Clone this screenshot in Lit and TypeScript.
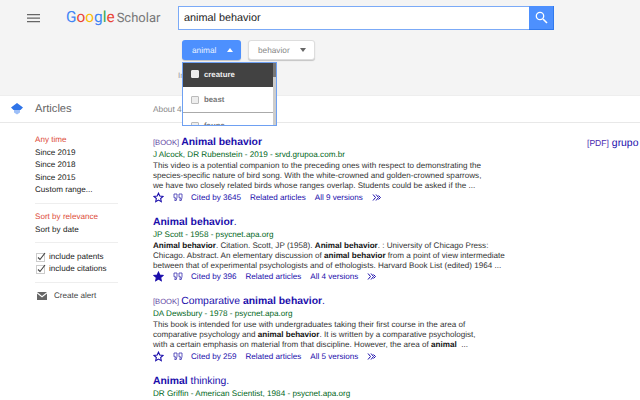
import { css, html, LitElement, nothing } from 'lit';
import { customElement } from 'lit/decorators.js';

interface Result {
  tag?: string;
  title: unknown;
  meta: string;
  lines: unknown[];
  starred?: boolean;
  cited: number;
  versions: number;
}

const RESULTS: Result[] = [
  {
    tag: '[BOOK]',
    title: html`<b>Animal behavior</b>`,
    meta: 'J Alcock, DR Rubenstein - 2019 - srvd.grupoa.com.br',
    lines: [
      'This video is a potential companion to the preceding ones with respect to demonstrating the',
      'species-specific nature of bird song. With the white-crowned and golden-crowned sparrows,',
      'we have two closely related birds whose ranges overlap. Students could be asked if the ...'
    ],
    cited: 3645,
    versions: 9
  },
  {
    title: html`<b>Animal behavior</b>.`,
    meta: 'JP Scott - 1958 - psycnet.apa.org',
    lines: [
      html`<b>Animal behavior</b>. Citation. Scott, JP (1958). <b>Animal behavior</b>. : University of Chicago Press:`,
      html`Chicago. Abstract. An elementary discussion of <b>animal behavior</b> from a point of view intermediate`,
      'between that of experimental psychologists and of ethologists. Harvard Book List (edited) 1964 ...'
    ],
    starred: true,
    cited: 396,
    versions: 4
  },
  {
    tag: '[BOOK]',
    title: html`Comparative <b>animal behavior</b>.`,
    meta: 'DA Dewsbury - 1978 - psycnet.apa.org',
    lines: [
      'This book is intended for use with undergraduates taking their first course in the area of',
      html`comparative psychology and <b>animal behavior</b>. It is written by a comparative psychologist,`,
      html`with a certain emphasis on material from that discipline. However, the area of <b>animal</b> &nbsp;...`
    ],
    cited: 259,
    versions: 5
  },
  {
    title: html`<b>Animal</b> thinking.`,
    meta: 'DR Griffin - American Scientist, 1984 - psycnet.apa.org',
    lines: [],
    cited: 0,
    versions: 0
  }
];

@customElement('app-root')
export class AppRoot extends LitElement {
  static styles = css`
    :host {
      display: block;
      width: 640px;
      height: 400px;
      overflow: hidden;
      position: relative;
      background: #fff;
      font-family: 'Liberation Sans', Arial, sans-serif;
      color: #222;
      text-rendering: geometricPrecision;
    }

    svg {
      display: block;
    }

    .top {
      height: 96px;
      box-sizing: border-box;
      background: #f4f4f4;
      border-bottom: 1px solid #eee;
      padding: 6px 0 0 27px;
    }

    .top-row {
      display: flex;
      align-items: center;
      height: 24px;
    }

    .logo {
      width: 112px;
      margin-left: 26px;
      font: 15.4px/24px Roboto, sans-serif;
      color: #777;
      white-space: nowrap;
    }

    .logo .b { color: #4285f4; }
    .logo .r { color: #ea4335; }
    .logo .y { color: #fbbc05; }
    .logo .g { color: #34a853; }
    .logo .sp { margin-left: 2px; font-size: 13px; }

    .search {
      width: 376px;
      height: 24px;
      box-sizing: border-box;
      display: flex;
      background: #fff;
      border: 1px solid #7baaf7;
    }

    .search-text {
      flex: 1;
      padding-left: 5px;
      font-size: 10.85px;
      line-height: 22px;
      color: #222;
    }

    .search-btn {
      width: 25px;
      margin: -1px;
      background: #4d90fe;
      border-bottom: 1px solid #3079ed;
      border-right: 1px solid #3079ed;
      box-sizing: border-box;
      display: flex;
      align-items: center;
      justify-content: center;
    }

    .chips {
      position: relative;
      display: flex;
      gap: 7px;
      margin: 10px 0 0 155px;
    }

    .chip {
      box-sizing: border-box;
      height: 20px;
      border-radius: 3px;
      display: flex;
      align-items: center;
      justify-content: space-between;
      font-size: 8.25px;
      box-shadow: 0 1px 1px rgba(0, 0, 0, 0.2);
    }

    .chip.on {
      width: 59px;
      background: #4d90fe;
      color: #e8f0fe;
      padding: 0 8px 0 10px;
    }

    .chip.off {
      width: 67px;
      background: #fff;
      color: #888;
      border: 1px solid #ddd;
      padding: 0 8px 0 9px;
    }

    .caret-up,
    .caret-down {
      width: 0;
      height: 0;
      border-left: 3.5px solid transparent;
      border-right: 3.5px solid transparent;
    }

    .caret-up { border-bottom: 4px solid #fff; }
    .caret-down { border-top: 4px solid #666; }

    .hidden-line {
      margin: 11px 0 0 151px;
      font-size: 8px;
      line-height: 10px;
      color: #999;
    }

    .menu {
      position: absolute;
      left: 0;
      top: 22px;
      width: 95px;
      height: 64px;
      box-sizing: border-box;
      overflow: hidden;
      background: #fff;
      border: 1px solid #6ea0f2;
      z-index: 2;
    }

    .menu-item {
      height: 26px;
      box-sizing: border-box;
      width: 90px;
      display: flex;
      align-items: center;
      gap: 5px;
      padding: 0 0 0 8px;
      font-size: 7.8px;
      font-weight: bold;
      color: #777;
      border-bottom: 1px solid #aaa;
    }

    .menu-item.active {
      height: 24px;
      padding-bottom: 2px;
      background: #424242;
      color: #eee;
      border-bottom: none;
    }

    .box {
      width: 6px;
      height: 6px;
      background: #eee;
      border: 1px solid #bbb;
      border-radius: 1px;
    }

    .active .box {
      background: #eee;
      border-color: #eee;
    }

    .scroll {
      position: absolute;
      right: 0;
      top: 0;
      bottom: 0;
      width: 3px;
      background: #ccc;
    }

    .scroll::before {
      content: '';
      display: block;
      height: 14px;
      background: #777;
    }

    .bar {
      height: 27px;
      box-sizing: border-box;
      display: flex;
      align-items: center;
      border-bottom: 1px solid #e8e8e8;
      padding-left: 11px;
    }

    .bar-title {
      width: 118px;
      margin-left: 12px;
      font-size: 11.2px;
      color: #666;
    }

    .about {
      font-size: 8.3px;
      color: #888;
    }

    .main {
      display: flex;
      padding: 11px 0 0 35px;
    }

    .side {
      width: 83px;
      margin-right: 35px;
      flex: none;
      font-size: 8.1px;
      line-height: 12.5px;
      color: #222;
    }

    .side .sel {
      color: #dd4b39;
    }

    .side hr {
      border: 0;
      border-top: 1px solid #eee;
      margin: 6px 0 7.5px;
    }

    .check {
      display: flex;
      align-items: center;
      gap: 3px;
      margin-left: 1px;
    }

    .check svg {
      flex: none;
    }

    .alert {
      display: flex;
      align-items: center;
      gap: 7px;
      margin-left: 2px;
      color: #444;
    }

    .results {
      width: 434px;
      flex: none;
      margin-top: 3px;
    }

    .result {
      height: 79.5px;
    }

    .title {
      font-size: 10.4px;
      line-height: 12px;
      color: #1a0dab;
      white-space: nowrap;
    }

    .title b {
      font-weight: bold;
    }

    .tag {
      font-size: 7.6px;
      color: #5a3ea0;
      margin-right: 2px;
    }

    .meta {
      font-size: 8.15px;
      line-height: 12px;
      color: #006621;
      white-space: nowrap;
    }

    .snippet {
      font-size: 8.1px;
      line-height: 10px;
      color: #333;
      white-space: nowrap;
    }

    .snippet b {
      color: #111;
    }

    .actions {
      display: flex;
      align-items: center;
      gap: 9px;
      height: 12px;
      font-size: 8.1px;
      color: #1a0dab;
      white-space: nowrap;
    }

    .actions .quote {
      margin-right: -1px;
    }

    .aside {
      margin-top: 3px;
      font-size: 10.4px;
      line-height: 12px;
      color: #1a0dab;
      white-space: nowrap;
    }

    .aside .pdf {
      font-size: 8.6px;
      color: #4b2ab0;
    }
  `;

  private star(filled?: boolean) {
    return html`<svg width="11" height="11" viewBox="0 0 24 24" fill=${filled ? '#1a0dab' : 'none'} stroke="#1a0dab" stroke-width="2.4"><path d="M12 2.5l2.9 6.3 6.9.8-5.1 4.7 1.4 6.8-6.1-3.4-6.1 3.4 1.4-6.8-5.1-4.7 6.9-.8z"/></svg>`;
  }

  private actions(r: Result) {
    return html`<div class="actions">
      ${this.star(r.starred)}
      <svg class="quote" width="10" height="9" viewBox="0 0 20 18" fill="none" stroke="#3a30b0" stroke-width="1.6"><path d="M2 2h6v6.5L6.5 15H3.5L5 9.500H2zM12 2h6v6.500L16.500 15h-3L15 9.500h-3z"/></svg>
      <span>Cited by ${r.cited}</span>
      <span>Related articles</span>
      <span>All ${r.versions} versions</span>
      <svg width="10" height="9" viewBox="0 0 20 18" fill="none" stroke="#1a0dab" stroke-width="2"><path d="M2 3l5 6-5 6M8 3l5 6-5 6M13 5l4 4-4 4"/></svg>
    </div>`;
  }

  private check(label: string) {
    return html`<div class="check">
      <svg width="10" height="10" viewBox="0 0 10 10" fill="none"><rect x="0.5" y="1.5" width="8" height="8" fill="#fff" stroke="#ccc"/><path d="M2 5.5l2 2 5-6.5" stroke="#444" stroke-width="1.1"/></svg>
      ${label}
    </div>`;
  }

  render() {
    return html`
      <div class="top">
        <div class="top-row">
          <svg width="13" height="9" viewBox="0 0 13 9" fill="#666"><path d="M0 0h13v1.300H0zM0 3.500h13v1.300H0zM0 7h13v1.300H0z"/></svg>
          <div class="logo"><span class="b">G</span><span class="r">o</span><span class="y">o</span><span class="b">g</span><span class="g">l</span><span class="r">e</span><span class="sp">Scholar</span></div>
          <div class="search">
            <div class="search-text">animal behavior</div>
            <div class="search-btn">
              <svg width="13" height="13" viewBox="0 0 13 13" fill="none" stroke="#fff"><circle cx="5" cy="5" r="3.7" stroke-width="1.3"/><path d="M8 8l4 4" stroke-width="1.6"/></svg>
            </div>
          </div>
        </div>
        <div class="chips">
          <div class="chip on">animal<span class="caret-up"></span></div>
          <div class="chip off">behavior<span class="caret-down"></span></div>
          <div class="menu">
            <div class="menu-item active"><span class="box"></span>creature</div>
            <div class="menu-item"><span class="box"></span>beast</div>
            <div class="menu-item"><span class="box"></span>fauna</div>
            <div class="scroll"></div>
          </div>
        </div>
        <div class="hidden-line">In</div>
      </div>
      <div class="bar">
        <svg width="12" height="12" viewBox="0 0 12 12"><path d="M6 0l6 4.500-2.500 2.500h-7L0 4.500z" fill="#2f74e8"/><path d="M3 7h6v2.500L6 11.500 3 9.500z" fill="#9dbff8"/></svg>
        <div class="bar-title">Articles</div>
        <div class="about">About 4</div>
      </div>
      <div class="main">
        <div class="side">
          <div class="sel">Any time</div>
          <div>Since 2019</div>
          <div>Since 2018</div>
          <div>Since 2015</div>
          <div>Custom range...</div>
          <hr />
          <div class="sel">Sort by relevance</div>
          <div>Sort by date</div>
          <hr />
          ${this.check('include patents')}
          ${this.check('include citations')}
          <hr />
          <div class="alert">
            <svg width="10" height="8" viewBox="0 0 10 8"><path d="M0 0h10L5 4zM0 1.500l5 4 5-4V8H0z" fill="#666"/></svg>
            Create alert
          </div>
        </div>
        <div class="results">
          ${RESULTS.map(
            r => html`<div class="result">
              <div class="title">
                ${r.tag ? html`<span class="tag">${r.tag}</span>` : nothing}${r.title}
              </div>
              <div class="meta">${r.meta}</div>
              ${r.lines.map(l => html`<div class="snippet">${l}</div>`)}
              ${r.lines.length ? this.actions(r) : nothing}
            </div>`
          )}
        </div>
        <div class="aside"><span class="pdf">[PDF]</span> grupo</div>
      </div>
    `;
  }
}
